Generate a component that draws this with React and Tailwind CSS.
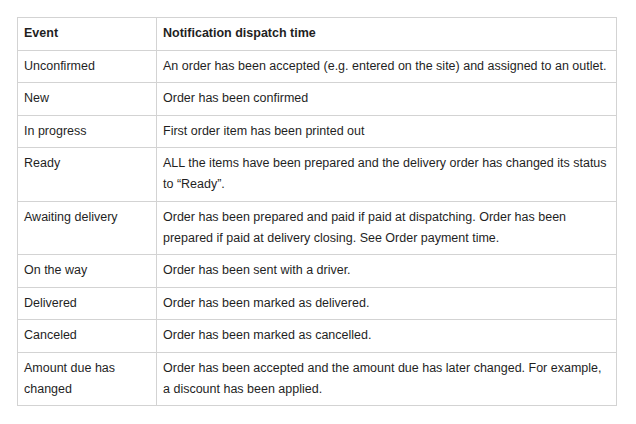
const rows = [
    ["Unconfirmed", "An order has been accepted (e.g. entered on the site) and assigned to an outlet."],
    ["New", "Order has been confirmed"],
    ["In progress", "First order item has been printed out"],
    ["Ready", "ALL the items have been prepared and the delivery order has changed its status to \u201CReady\u201D."],
    ["Awaiting delivery", "Order has been prepared and paid if paid at dispatching. Order has been prepared if paid at delivery closing. See Order payment time."],
    ["On the way", "Order has been sent with a driver."],
    ["Delivered", "Order has been marked as delivered."],
    ["Canceled", "Order has been marked as cancelled."],
    ["Amount due has changed", "Order has been accepted and the amount due has later changed. For example, a discount has been applied."],
];

const cell = "border border-[#d3d3d3] px-[6px] py-[5.25px] text-left align-top";

export default function App() {
    return (
        <div className="w-[636px] h-[424px] bg-white pt-[17px] pl-[17px] font-['Liberation_Sans',Arial,sans-serif] text-[12.5px] leading-[21px] text-[#1f1f1f]">
            <table className="w-[600px] border-collapse table-fixed">
                <colgroup>
                    <col className="w-[139px]" />
                    <col />
                </colgroup>
                <thead>
                    <tr>
                        <th className={`${cell} font-bold`}>Event</th>
                        <th className={`${cell} font-bold`}>Notification dispatch time</th>
                    </tr>
                </thead>
                <tbody>
                    {rows.map(([event, time]) => (
                        <tr key={event}>
                            <td className={cell}>{event}</td>
                            <td className={cell}>{time}</td>
                        </tr>
                    ))}
                </tbody>
            </table>
        </div>
    );
}
